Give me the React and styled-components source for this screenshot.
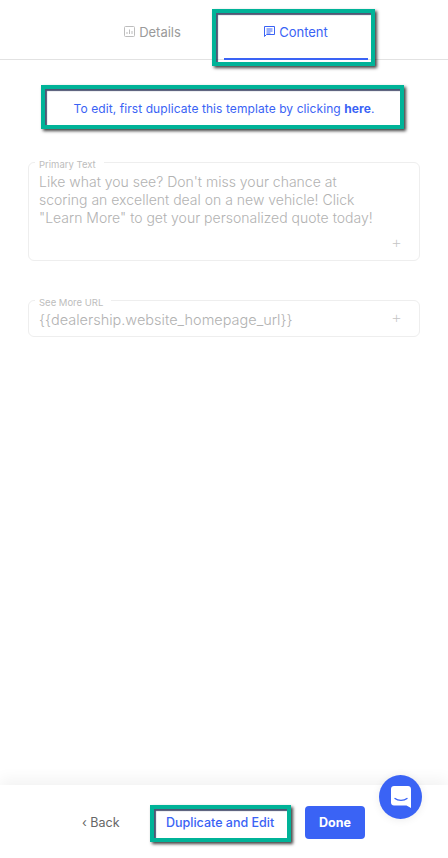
import React from "react";
import styled, { createGlobalStyle } from "styled-components";

const GlobalStyle = createGlobalStyle`
	html, body {
		margin: 0;
		padding: 0;
		background: #fff;
	}
	* {
		box-sizing: border-box;
	}
`;

const App = () => {
	return (
		<Page>
			<GlobalStyle />
			<TabBar>
				<Tab>
					<DetailsIcon />
					Details
				</Tab>
				<Tab $active>
					<Marker $inset="9px -7px -8px -12px" />
					<ContentIcon />
					Content
				</Tab>
			</TabBar>

			<Banner>
				<Marker $inset="-7px -5px -5px -8px" />
				To edit, first duplicate this template by clicking <b>here</b>.
			</Banner>

			<Form>
				<Field>
					<Legend>Primary Text</Legend>
					<FieldBody $height={89}>
						<FieldText $size={14}>
							Like what you see? Don't miss your chance at
							<br />
							scoring an excellent deal on a new vehicle! Click
							<br />
							"Learn More" to get your personalized quote today!
						</FieldText>
						<Plus $top={63}>+</Plus>
					</FieldBody>
				</Field>
				<Field>
					<Legend>See More URL</Legend>
					<FieldBody $height={27}>
						<FieldText $size={14.5}>{"{{dealership.website_homepage_url}}"}</FieldText>
						<Plus $top={0}>+</Plus>
					</FieldBody>
				</Field>
			</Form>

			<Footer>
				<BackButton>‹ Back</BackButton>
				<DuplicateButton>
					<Marker $inset="-1px -18px -3px -16px" />
					Duplicate and Edit
				</DuplicateButton>
				<DoneButton>Done</DoneButton>
			</Footer>

			<ChatBubble>
				<ChatIcon />
			</ChatBubble>
		</Page>
	);
};

export default App;

const DetailsIcon = () => (
	<svg width="11" height="11" viewBox="0 0 11 11" fill="none" stroke="#bdbdbd">
		<rect x="0.5" y="0.5" width="10" height="10" rx="1" />
		<path d="M3 8V6M5.5 8V3.5M8 8V5" />
	</svg>
);

const ContentIcon = () => (
	<svg width="11" height="12" viewBox="0 0 11 12" fill="none" stroke="#3a63f5">
		<path d="M0.5 0.5H10.5V8.5H2.5L0.5 10.5Z" />
		<path d="M2.5 3H8.5M2.5 5H8.5M2.5 7H6.5" />
	</svg>
);

const ChatIcon = () => (
	<svg width="20" height="22" viewBox="0 0 20 22">
		<path
			d="M3 0H17C18.7 0 20 1.3 20 3V22L15.5 19.5H3C1.3 19.5 0 18.2 0 16.5V3C0 1.3 1.3 0 3 0Z"
			fill="#fff"
		/>
		<path d="M4 12.5C7 15 13 15 16 12.5" fill="none" stroke="#3a63f5" strokeWidth="1.3" strokeLinecap="round" />
	</svg>
);

const Page = styled.div`
	position: relative;
	width: 448px;
	height: 858px;
	overflow: hidden;
	display: flex;
	flex-direction: column;
	font-family: Inter, "Noto Sans", sans-serif;
	background: #fff;
`;
const TabBar = styled.div`
	height: 60px;
	flex-shrink: 0;
	padding-left: 112px;
	display: flex;
	gap: 31px;
	border-bottom: 1px solid #e2e2e2;
`;
const Tab = styled.div`
	position: relative;
	width: ${(p) => (p.$active ? "144px" : "81px")};
	height: ${(p) => (p.$active ? "60px" : "59px")};
	padding-top: 25px;
	display: flex;
	justify-content: center;
	align-items: flex-start;
	gap: 4px;
	font-size: 13px;
	line-height: 15px;
	color: ${(p) => (p.$active ? "#3a63f5" : "#9a9a9a")};
	border-bottom: ${(p) => (p.$active ? "2px solid #3a63f5" : "none")};
	svg {
		margin-top: 1px;
	}
`;
const Marker = styled.span`
	position: absolute;
	inset: ${(p) => p.$inset};
	border: 4px solid #00b398;
	box-shadow: 2px 2px 3px rgba(0, 0, 0, 0.75), inset 2px 2px 1px rgba(20, 30, 70, 0.75);
	pointer-events: none;
`;
const Banner = styled.div`
	position: relative;
	margin: 32px 49px 0;
	height: 32px;
	display: flex;
	align-items: center;
	justify-content: center;
	white-space: pre-wrap;
	font-size: 12px;
	letter-spacing: 0.08px;
	color: #3a63f5;
	b {
		font-weight: 700;
	}
`;
const Form = styled.div`
	margin: 29px 28px 0;
	display: flex;
	flex-direction: column;
	gap: 30px;
`;
const Field = styled.fieldset`
	margin: 0;
	padding: 0 10px;
	min-width: 0;
	border: 1px solid #eeeeee;
	border-radius: 6px;
`;
const Legend = styled.legend`
	padding: 6px 8px 0 4px;
	margin-left: -4px;
	height: 18px;
	font-size: 9.5px;
	line-height: 12px;
	color: #bdbdbd;
`;
const FieldBody = styled.div`
	height: ${(p) => p.$height}px;
	padding-right: 7px;
	display: flex;
	justify-content: space-between;
	align-items: flex-start;
`;
const FieldText = styled.div`
	margin-top: 2px;
	font-size: ${(p) => p.$size}px;
	line-height: 18px;
	font-weight: 300;
	white-space: nowrap;
	color: #b2b2b2;
`;
const Plus = styled.span`
	margin-top: ${(p) => p.$top}px;
	font-size: 17px;
	line-height: 16px;
	font-weight: 200;
	color: #c4c4c4;
`;
const Footer = styled.div`
	margin-top: auto;
	height: 73px;
	flex-shrink: 0;
	padding: 21px 83px 0 82px;
	display: flex;
	align-items: flex-start;
	background: #fff;
	box-shadow: 0 -6px 14px rgba(0, 0, 0, 0.05);
	font-size: 12.5px;
`;
const BackButton = styled.div`
	width: 84px;
	height: 33px;
	line-height: 33px;
	color: #666;
`;
const DuplicateButton = styled.div`
	position: relative;
	width: 107px;
	height: 33px;
	line-height: 33px;
	white-space: nowrap;
	color: #3a63f5;
	font-weight: 500;
`;
const DoneButton = styled.div`
	margin-left: 32px;
	width: 60px;
	height: 33px;
	border-radius: 4px;
	background: #3a63f5;
	color: #fff;
	font-weight: 700;
	line-height: 33px;
	text-align: center;
`;
const ChatBubble = styled.div`
	position: absolute;
	left: 379px;
	top: 775px;
	width: 43px;
	height: 44px;
	border-radius: 50%;
	background: #3a63f5;
	display: flex;
	align-items: center;
	justify-content: center;
	box-shadow: 0 1px 8px rgba(0, 0, 0, 0.08);
`;
